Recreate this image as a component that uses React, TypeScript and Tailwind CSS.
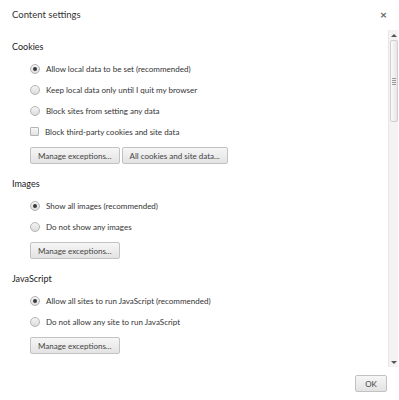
import React from "react";

type Opt = { label: string; checked?: boolean; box?: boolean };

const sections: { title: string; options: Opt[]; buttons: string[] }[] = [
  {
    title: "Cookies",
    options: [
      { label: "Allow local data to be set (recommended)", checked: true },
      { label: "Keep local data only until I quit my browser" },
      { label: "Block sites from setting any data" },
      { label: "Block third-party cookies and site data", box: true },
    ],
    buttons: ["Manage exceptions...", "All cookies and site data..."],
  },
  {
    title: "Images",
    options: [
      { label: "Show all images (recommended)", checked: true },
      { label: "Do not show any images" },
    ],
    buttons: ["Manage exceptions..."],
  },
  {
    title: "JavaScript",
    options: [
      { label: "Allow all sites to run JavaScript (recommended)", checked: true },
      { label: "Do not allow any site to run JavaScript" },
    ],
    buttons: ["Manage exceptions..."],
  },
];

function Radio({ checked }: { checked?: boolean }) {
  return (
    <span className="flex h-[10px] w-[10px] shrink-0 items-center justify-center rounded-full border border-[#b4b4b4] bg-gradient-to-b from-[#f4f4f4] to-[#dcdcdc]">
      {checked && <span className="h-[4px] w-[4px] rounded-full bg-[#3a3a3a]" />}
    </span>
  );
}

function Box() {
  return <span className="h-[9px] w-[9px] shrink-0 rounded-[1px] border border-[#b4b4b4] bg-gradient-to-b from-[#f6f6f6] to-[#e2e2e2]" />;
}

function Button({ children }: { children: React.ReactNode }) {
  return (
    <button className="h-[17px] rounded-[2px] border border-[#c2c2c2] bg-gradient-to-b from-[#f6f6f6] to-[#e3e3e3] px-[7px] text-[8px] leading-none text-[#444]">
      {children}
    </button>
  );
}

export default function App() {
  return (
    <div className="relative h-[400px] w-[399px] overflow-hidden bg-white text-[#333] [font-family:Lato,sans-serif]">
      <div className="flex h-[30px] items-center justify-between pl-[12px] pr-[12px]">
        <span className="text-[9.5px] text-[#333]">Content settings</span>
        <span className="text-[12px] font-bold leading-none text-[#666]">×</span>
      </div>

      <div className="flex h-[337px]">
        <div className="flex-1 pl-[12px] pt-[7px]">
          {sections.map((s, i) => (
            <div key={s.title} className={i > 0 ? "mt-[10px]" : ""}>
              <div className="flex h-[20px] items-center text-[9px] text-[#222]">{s.title}</div>
              <div className="mt-px">
                {s.options.map((o) => (
                  <div key={o.label} className="flex h-[21px] items-center gap-[6px] pl-[18px] text-[8px] text-[#333]">
                    {o.box ? <Box /> : <Radio checked={o.checked} />}
                    <span>{o.label}</span>
                  </div>
                ))}
              </div>
              <div className="mt-[5px] flex gap-[2px] pl-[18px]">
                {s.buttons.map((b) => (
                  <Button key={b}>{b}</Button>
                ))}
              </div>
            </div>
          ))}
        </div>

        {/* scrollbar */}
        <div className="mr-px flex w-[10px] flex-col items-center border-l border-[#e6e6e6] bg-[#f3f3f3]">
          <div className="flex h-[10px] items-center justify-center">
            <span className="h-0 w-0 border-x-[3px] border-b-[3px] border-x-transparent border-b-[#555]" />
          </div>
          <div className="flex h-[82px] w-[8px] items-center justify-center rounded-[2px] border border-[#cfcfcf] bg-gradient-to-r from-[#fafafa] to-[#e6e6e6]">
            <div className="flex flex-col gap-px">
              <span className="h-px w-[4px] bg-[#999]" />
              <span className="h-px w-[4px] bg-[#999]" />
              <span className="h-px w-[4px] bg-[#999]" />
              <span className="h-px w-[4px] bg-[#999]" />
            </div>
          </div>
          <div className="flex-1" />
          <div className="flex h-[10px] items-center justify-center">
            <span className="h-0 w-0 border-x-[3px] border-t-[3px] border-x-transparent border-t-[#555]" />
          </div>
        </div>
      </div>

      <div className="flex justify-end pr-[12px] pt-[8px]">
        <button className="h-[17px] w-[32px] rounded-[2px] border border-[#c2c2c2] bg-gradient-to-b from-[#f6f6f6] to-[#e3e3e3] text-[8px] leading-none text-[#444]">
          OK
        </button>
      </div>
    </div>
  );
}
